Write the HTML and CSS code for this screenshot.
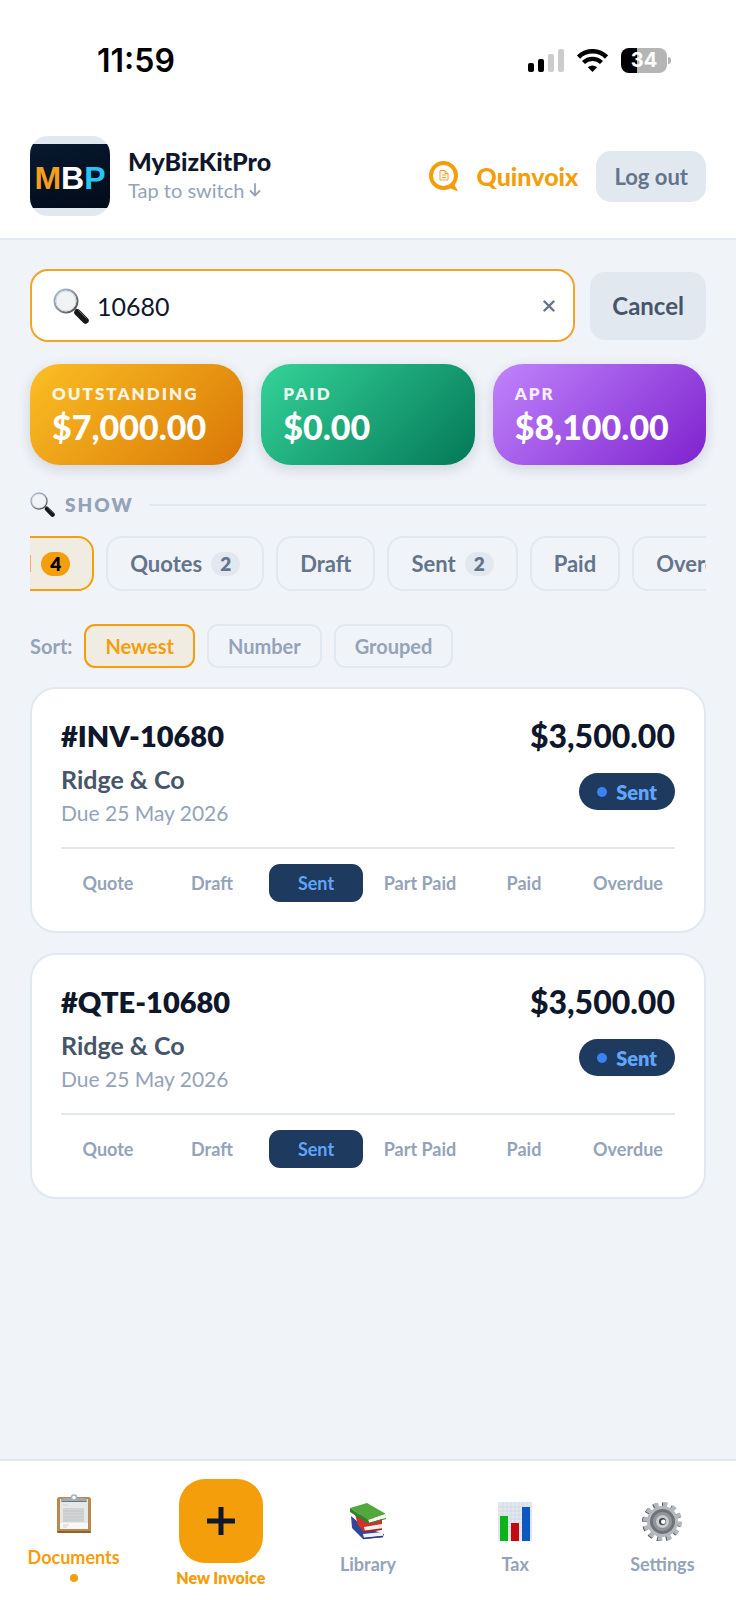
FILE: index.html
```
<!DOCTYPE html>
<html lang="en">
<head>
  <meta charset="UTF-8">
  <meta name="viewport" content="width=device-width, initial-scale=1.0">
  <title>Quinvoix - Documents</title>
  <link rel="stylesheet" href="styles.css">
</head>

<body>
  <!-- shared icon -->
  <svg class="defs" aria-hidden="true">
    <defs>
      <linearGradient id="rim" x1="0" y1="0" x2="1" y2="1">
        <stop offset="0" stop-color="#a9c3e6"/>
        <stop offset="0.5" stop-color="#8e9299"/>
        <stop offset="1" stop-color="#3c3f44"/>
      </linearGradient>
    </defs>
    <symbol id="magnifier" viewBox="0 0 36 36">
      <path d="M22 21l3 3" stroke="#777" stroke-width="3"/>
      <path d="M24.500 24.500l8 8" stroke="#17181b" stroke-width="6.500" stroke-linecap="round"/>
      <path d="M25.500 22.500l8 8" stroke="#62656a" stroke-width="1" stroke-linecap="round"/>
      <circle cx="13" cy="13" r="11.500" fill="#f2f3f5" stroke="url(#rim)" stroke-width="2"/>
      <circle cx="13" cy="13" r="10" fill="none" stroke="#d4d7db" stroke-width="1"/>
    </symbol>
  </svg>

  <div class="status-bar">
    <span class="time">11:59</span>
    <div class="status-icons">
      <svg width="36" height="23" viewBox="0 0 36 23">
        <rect x="0" y="14" width="6" height="9" rx="2"/>
        <rect x="10" y="10" width="6" height="13" rx="2"/>
        <rect x="20" y="5" width="6" height="18" rx="2" fill="#ccc"/>
        <rect x="30" y="0" width="6" height="23" rx="2" fill="#ccc"/>
      </svg>
      <svg width="31" height="23" viewBox="0 0 31 23">
        <path d="M1.500 8a20 20 0 0 1 28 0" fill="none" stroke="#000" stroke-width="4.600"/>
        <path d="M6.500 13.500a12.800 12.800 0 0 1 18 0" fill="none" stroke="#000" stroke-width="4.200"/>
        <path d="M10.800 18.200a7 7 0 0 1 9.400 0L15.500 23z"/>
      </svg>
      <div class="battery"><span>34</span></div>
    </div>
  </div>

  <header class="header">
    <button class="business" type="button">
      <span class="logo"><span class="logo-inner"><b class="m">M</b><b class="b">B</b><b class="p">P</b></span></span>
      <span class="business-text">
        <span class="business-name">MyBizKitPro</span>
        <span class="business-hint">Tap to switch
          <svg width="12" height="14" viewBox="0 0 12 14" fill="none" stroke="currentColor" stroke-width="1.800" stroke-linecap="round" stroke-linejoin="round"><path d="M6 1v11M1.500 8L6 12.500 10.500 8"/></svg>
        </span>
      </span>
    </button>
    <div class="brand">
      <svg width="30" height="31" viewBox="0 0 30 31">
        <circle cx="14.500" cy="14.500" r="12.500" fill="none" stroke="#f59e0b" stroke-width="4"/>
        <path d="M18 26l6-5 5 9.500z" fill="#f59e0b"/>
        <path d="M11 9.500h5l3 3V19h-8zM16 9.500v3h3M13 14h4M13 16.500h4" fill="none" stroke="#f59e2b" stroke-width="1"/>
      </svg>
      <span class="brand-name">Quinvoix</span>
    </div>
    <button class="logout" type="button">Log out</button>
  </header>

  <main class="main">
    <div class="search-row">
      <div class="search">
        <svg width="36" height="36"><use href="#magnifier"/></svg>
        <input type="text" value="10680" aria-label="Search documents">
        <button class="clear" type="button" aria-label="Clear">
          <svg width="12" height="12" viewBox="0 0 12 12" stroke="#64748b" stroke-width="2.400" stroke-linecap="round"><path d="M1.500 1.500l9 9M10.500 1.500l-9 9"/></svg>
        </button>
      </div>
      <button class="cancel" type="button">Cancel</button>
    </div>

    <div class="stats">
      <div class="stat outstanding">
        <span class="stat-label">OUTSTANDING</span>
        <span class="stat-value">$7,000.00</span>
      </div>
      <div class="stat paid">
        <span class="stat-label">PAID</span>
        <span class="stat-value">$0.00</span>
      </div>
      <div class="stat month">
        <span class="stat-label">APR</span>
        <span class="stat-value">$8,100.00</span>
      </div>
    </div>

    <div class="show">
      <svg width="25" height="25"><use href="#magnifier"/></svg>
      <h2>SHOW</h2>
    </div>

    <div class="filters">
      <button class="chip active" type="button">All <span class="count">4</span></button>
      <button class="chip" type="button">Quotes <span class="count">2</span></button>
      <button class="chip" type="button">Draft</button>
      <button class="chip" type="button">Sent <span class="count">2</span></button>
      <button class="chip" type="button">Paid</button>
      <button class="chip" type="button">Overdue</button>
    </div>

    <div class="sort">
      <span class="sort-label">Sort:</span>
      <button class="sort-btn active" type="button">Newest</button>
      <button class="sort-btn" type="button">Number</button>
      <button class="sort-btn" type="button">Grouped</button>
    </div>

    <article class="card">
      <div class="card-top">
        <div class="card-left">
          <h3>#INV-10680</h3>
          <p class="client">Ridge &amp; Co</p>
          <p class="due">Due 25 May 2026</p>
        </div>
        <div class="card-right">
          <span class="amount">$3,500.00</span>
          <span class="pill">Sent</span>
        </div>
      </div>
      <div class="steps">
        <button type="button">Quote</button>
        <button type="button">Draft</button>
        <button class="active" type="button">Sent</button>
        <button type="button">Part Paid</button>
        <button type="button">Paid</button>
        <button type="button">Overdue</button>
      </div>
    </article>

    <article class="card">
      <div class="card-top">
        <div class="card-left">
          <h3>#QTE-10680</h3>
          <p class="client">Ridge &amp; Co</p>
          <p class="due">Due 25 May 2026</p>
        </div>
        <div class="card-right">
          <span class="amount">$3,500.00</span>
          <span class="pill">Sent</span>
        </div>
      </div>
      <div class="steps">
        <button type="button">Quote</button>
        <button type="button">Draft</button>
        <button class="active" type="button">Sent</button>
        <button type="button">Part Paid</button>
        <button type="button">Paid</button>
        <button type="button">Overdue</button>
      </div>
    </article>
  </main>

  <nav class="tabbar">
    <a class="tab active" href="#documents">
      <svg width="40" height="40" viewBox="0 0 40 40">
        <rect x="3" y="3" width="34" height="36" rx="2.500" fill="#b98a4e"/>
        <rect x="3" y="37" width="34" height="2" rx="1" fill="#8a6230"/>
        <path d="M6 5h28v30H6z" fill="#e6e7e8"/>
        <path d="M6 29h28v6H6z" fill="#f8f8f8"/>
        <path d="M9 11h5M9 31h6M9 33h4" stroke="#cfd0d2" stroke-width="1"/>
        <path d="M9 14h21v14H9z" fill="#d2d3d5"/>
        <path d="M9 17h21M9 20h21M9 23h21M9 26h21" stroke="#c6c7c9" stroke-width="1"/>
        <path d="M7 5.500L10 4h20l3 1.500V8H7z" fill="#a4a9b0"/>
        <path d="M8 7.500h24" stroke="#71767c" stroke-width="1"/>
        <circle cx="20" cy="3.500" r="2.500" fill="#fff" stroke="#a5b3c2" stroke-width="1.500"/>
      </svg>
      <span>Documents</span>
      <i class="dot"></i>
    </a>
    <a class="tab new" href="#new">
      <span class="plus">
        <svg width="28" height="28" viewBox="0 0 28 28" stroke="#0f172a" stroke-width="5"><path d="M14 0v28M0 14h28"/></svg>
      </span>
      <span>New Invoice</span>
    </a>
    <a class="tab" href="#library">
      <svg width="40" height="40" viewBox="0 0 40 40">
        <path d="M3 15l1 12 11 11 20-2 1-3-20-7z" fill="#31479c"/>
        <path d="M15 33l20-2v4l-19 2z" fill="#f3f3f6"/>
        <path d="M15 37.500l20-2" stroke="#283b8a" stroke-width="1.500"/>
        <path d="M7 13l3 11 6 7 18-2V18z" fill="#cf3226"/>
        <path d="M16 26l18-3v5l-17 2z" fill="#f1eeee"/>
        <path d="M16 30.500l18-2.500" stroke="#a81e1a" stroke-width="1.500"/>
        <path d="M2 7l17-5 19 11-18 6z" fill="#52a83e"/>
        <path d="M20 19l18-6v4l-17 5z" fill="#f4f4f1"/>
        <path d="M2 7v4l18 11.500 1-1.500-1-2z" fill="#2f8427"/>
        <path d="M20 22.500l18-5" stroke="#33852a" stroke-width="1"/>
      </svg>
      <span>Library</span>
    </a>
    <a class="tab" href="#tax">
      <svg width="40" height="40" viewBox="0 0 40 40">
        <rect x="3" y="1" width="34" height="39" fill="#e3e7ee"/>
        <path d="M3 6h34M3 10h34M3 14h34M3 18h34M3 22h34M3 26h34M3 30h34M3 34h34M8 1v39M12 1v39M16 1v39M20 1v39M24 1v39M28 1v39M32 1v39" stroke="#cfd6e2" stroke-width="0.600"/>
        <rect x="5" y="15" width="8" height="25" fill="#0bb518"/>
        <rect x="16" y="22" width="8" height="18" fill="#c40a10"/>
        <rect x="27" y="6" width="8" height="34" fill="#0d57c0"/>
      </svg>
      <span>Tax</span>
    </a>
    <a class="tab" href="#settings">
      <svg width="40" height="40" viewBox="0 0 40 40">
        <circle cx="19.500" cy="21" r="17" fill="none" stroke="#55585d" stroke-width="5" stroke-dasharray="4.400 4.500"/>
        <circle cx="20.500" cy="20.500" r="17" fill="none" stroke="#b3b6bb" stroke-width="5" stroke-dasharray="4.400 4.500"/>
        <circle cx="20.500" cy="20.500" r="15.500" fill="#b5b8bd"/>
        <circle cx="20.500" cy="20.500" r="11" fill="#94989e" stroke="#70747a" stroke-width="3"/>
        <circle cx="20.500" cy="20.500" r="7" fill="#c9cbcf" stroke="#8a8d92" stroke-width="1"/>
        <circle cx="20.500" cy="20.500" r="3.500" fill="#3f4247"/>
        <circle cx="21.300" cy="20.800" r="2.300" fill="#fff"/>
      </svg>
      <span>Settings</span>
    </a>
  </nav>

  <script>
    // keep the filter strip scrolled so the tail of the first chip shows
    var filters = document.getElementsByClassName("filters")[0];
    var firstChip = filters.getElementsByClassName("chip")[0];
    filters.scrollLeft = firstChip.offsetWidth - 64;
  </script>
</body>
</html>
```
FILE: styles.css
```
/* reset */
*{
  margin: 0;
  padding: 0;
  box-sizing: border-box;
}
body{
  min-height: 100vh;
  display: flex;
  flex-direction: column;
  background-color: #f0f4f9;
  font-family: Lato, "Liberation Sans", sans-serif;
  color: #0f172a;
}
button, input{
  font-family: inherit;
  border: none;
  background: none;
}
button{
  cursor: pointer;
}
a{
  text-decoration: none;
}
svg{
  display: block;
  flex-shrink: 0;
}
.defs{
  position: absolute;
  width: 0;
  height: 0;
}

/* status bar */
.status-bar{
  height: 120px;
  padding: 0 69px 0 97px;
  display: flex;
  align-items: center;
  justify-content: space-between;
  background-color: #fff;
}
.time{
  font: 600 32px Inter, sans-serif;
  color: #000;
}
.status-icons{
  display: flex;
  align-items: center;
  gap: 13px;
}
.battery{
  position: relative;
  width: 46px;
  height: 25px;
  border-radius: 8px;
  background: linear-gradient(90deg, #000 35%, #b5b5b5 35%);
  color: #fff;
  font: 700 20px/25px Inter, sans-serif;
  text-align: center;
}
.battery::after{
  content: "";
  position: absolute;
  right: -4px;
  top: 9px;
  width: 3px;
  height: 7px;
  border-radius: 0 3px 3px 0;
  background-color: #b5b5b5;
}

/* header */
.header{
  height: 120px;
  padding: 0 30px 6px;
  display: flex;
  align-items: center;
  background-color: #fff;
  border-bottom: 2px solid #e2e8f0;
}
.business{
  display: flex;
  align-items: center;
  gap: 18px;
  text-align: left;
  color: #0f172a;
}
.logo{
  width: 80px;
  height: 80px;
  border-radius: 18px;
  overflow: hidden;
  display: flex;
  align-items: center;
  background-color: #e2e8f0;
}
.logo-inner{
  width: 100%;
  height: 64px;
  padding-top: 4px;
  display: flex;
  align-items: center;
  justify-content: center;
  background: linear-gradient(160deg, #071a30, #020a18);
  font: 700 32px "Liberation Sans", sans-serif;
}
.logo .m{
  color: #f59e1b;
}
.logo .b{
  color: #fff;
}
.logo .p{
  color: #22c7f5;
}
.business-text{
  padding-bottom: 2px;
  display: flex;
  flex-direction: column;
}
.business-name{
  font-size: 25px;
  line-height: 30px;
  font-weight: 900;
}
.business-hint{
  display: flex;
  align-items: center;
  gap: 5px;
  font-size: 20px;
  line-height: 28px;
  color: #94a3b8;
}
.brand{
  margin-left: auto;
  display: flex;
  align-items: center;
  gap: 18px;
}
.brand-name{
  font-size: 25px;
  line-height: 28px;
  font-weight: 900;
  color: #f59e0b;
}
.logout{
  margin-left: 18px;
  height: 51px;
  padding: 0 18px;
  border-radius: 15px;
  background-color: #e2e8f0;
  color: #64748b;
  font-size: 22px;
  font-weight: 700;
}

/* content */
.main{
  flex: 1;
  padding: 29px 30px;
}
.search-row{
  display: flex;
  align-items: center;
  gap: 15px;
}
.search{
  flex: 1;
  min-width: 0;
  height: 73px;
  padding: 0 18px 0 21px;
  display: flex;
  align-items: center;
  gap: 8px;
  background-color: #fff;
  border: 2px solid #f0a428;
  border-radius: 18px;
}
.search input{
  flex: 1;
  min-width: 0;
  font-size: 25px;
  color: #0f172a;
  outline: none;
}
.clear{
  flex-shrink: 0;
}
.cancel{
  height: 68px;
  padding: 0 22px;
  border-radius: 15px;
  background-color: #e2e8f0;
  color: #475569;
  font-size: 24px;
  font-weight: 700;
}

/* totals */
.stats{
  margin-top: 22px;
  display: grid;
  grid-template-columns: repeat(3, 1fr);
  gap: 18px;
}
.stat{
  padding: 18px 22px;
  display: flex;
  flex-direction: column;
  border-radius: 30px;
  color: #fff;
  box-shadow: 0 4px 14px rgba(15, 23, 42, 0.14);
}
.outstanding{
  background: linear-gradient(135deg, #fbbf24, #d97706);
}
.paid{
  background: linear-gradient(135deg, #34d399, #047857);
}
.month{
  background: linear-gradient(135deg, #c084fc, #7e22ce);
}
.stat-label{
  font-size: 17px;
  line-height: 24px;
  font-weight: 800;
  letter-spacing: 2px;
  opacity: 0.88;
}
.stat-value{
  font-size: 34px;
  line-height: 41px;
  font-weight: 900;
}

.show{
  margin-top: 27px;
  display: flex;
  align-items: center;
  gap: 10px;
}
.show h2{
  font-size: 19px;
  line-height: 24px;
  font-weight: 800;
  letter-spacing: 2px;
  color: #94a3b8;
}
.show::after{
  content: "";
  flex: 1;
  height: 2px;
  margin-left: 5px;
  background-color: #e2e8f0;
}

/* filter strip */
.filters{
  margin-top: 19px;
  display: flex;
  gap: 12px;
  overflow-x: auto;
  scrollbar-width: none;
}
.chip{
  flex-shrink: 0;
  height: 55px;
  padding: 0 22px;
  display: flex;
  align-items: center;
  gap: 9px;
  border: 2px solid #e2e8f0;
  border-radius: 16px;
  color: #64748b;
  font-size: 22px;
  font-weight: 700;
}
.count{
  padding: 0 9px;
  border-radius: 12px;
  background-color: #e2e8f0;
  font-size: 19px;
  line-height: 24px;
  font-weight: 800;
}
.chip.active{
  border-color: #f59e0b;
  background-color: #f1ece2;
  color: #f59e0b;
}
.chip.active .count{
  background-color: #f59e0b;
  color: #000;
}

.sort{
  margin-top: 33px;
  display: flex;
  align-items: center;
  gap: 12px;
}
.sort-label{
  font-size: 20px;
  font-weight: 700;
  color: #94a3b8;
}
.sort-btn{
  height: 44px;
  padding: 0 19px;
  border: 2px solid #e2e8f0;
  border-radius: 11px;
  color: #94a3b8;
  font-size: 20px;
  font-weight: 700;
}
.sort-btn.active{
  border-color: #f59e0b;
  background-color: #f1ece2;
  color: #f59e0b;
}

/* document card */
.card{
  margin-top: 20px;
  padding: 28px 29px 29px;
  background-color: #fff;
  border: 2px solid #e2e8f0;
  border-radius: 26px;
}
.sort + .card{
  margin-top: 19px;
}
.card-top{
  padding-bottom: 19px;
  display: flex;
  justify-content: space-between;
  border-bottom: 2px solid #e2e8f0;
}
.card h3{
  font-size: 29px;
  line-height: 38px;
  font-weight: 800;
}
.amount{
  font-size: 32px;
  line-height: 38px;
  font-weight: 900;
}
.client{
  margin-top: 5px;
  font-size: 25px;
  line-height: 38px;
  font-weight: 700;
  color: #475569;
}
.due{
  font-size: 21px;
  line-height: 30px;
  color: #94a3b8;
}
.card-right{
  display: flex;
  flex-direction: column;
  align-items: flex-end;
  gap: 18px;
}
.pill{
  height: 37px;
  padding: 0 18px;
  display: flex;
  align-items: center;
  gap: 9px;
  border-radius: 19px;
  background-color: #1e3a5f;
  color: #60a5fa;
  font-size: 20px;
  font-weight: 800;
}
.pill::before{
  content: "";
  width: 10px;
  height: 10px;
  border-radius: 50%;
  background-color: #3b82f6;
}
.steps{
  margin-top: 15px;
  display: grid;
  grid-template-columns: repeat(6, 1fr);
  gap: 10px;
}
.steps button{
  height: 38px;
  border-radius: 11px;
  color: #94a3b8;
  font-size: 18px;
  font-weight: 700;
  white-space: nowrap;
}
.steps .active{
  background-color: #1e3a5f;
  color: #60a5fa;
}

/* bottom tabs */
.tabbar{
  position: sticky;
  bottom: 0;
  height: 141px;
  display: grid;
  grid-template-columns: repeat(5, 1fr);
  background-color: #fff;
  border-top: 2px solid #e2e8f0;
}
.tab{
  padding-top: 40px;
  display: flex;
  flex-direction: column;
  align-items: center;
  gap: 12px;
  color: #94a3b8;
  font-size: 18px;
  line-height: 22px;
  font-weight: 700;
}
.tab.active{
  padding-top: 33px;
  color: #f59e0b;
}
.dot{
  width: 8px;
  height: 8px;
  margin-top: -6px;
  border-radius: 50%;
  background-color: #f59e0b;
}
.tab.new{
  padding-top: 18px;
  gap: 4px;
  color: #f59e0b;
  font-size: 16px;
  font-weight: 800;
}
.plus{
  width: 84px;
  height: 84px;
  display: flex;
  align-items: center;
  justify-content: center;
  border-radius: 26px;
  background-color: #f59e0b;
}
```
